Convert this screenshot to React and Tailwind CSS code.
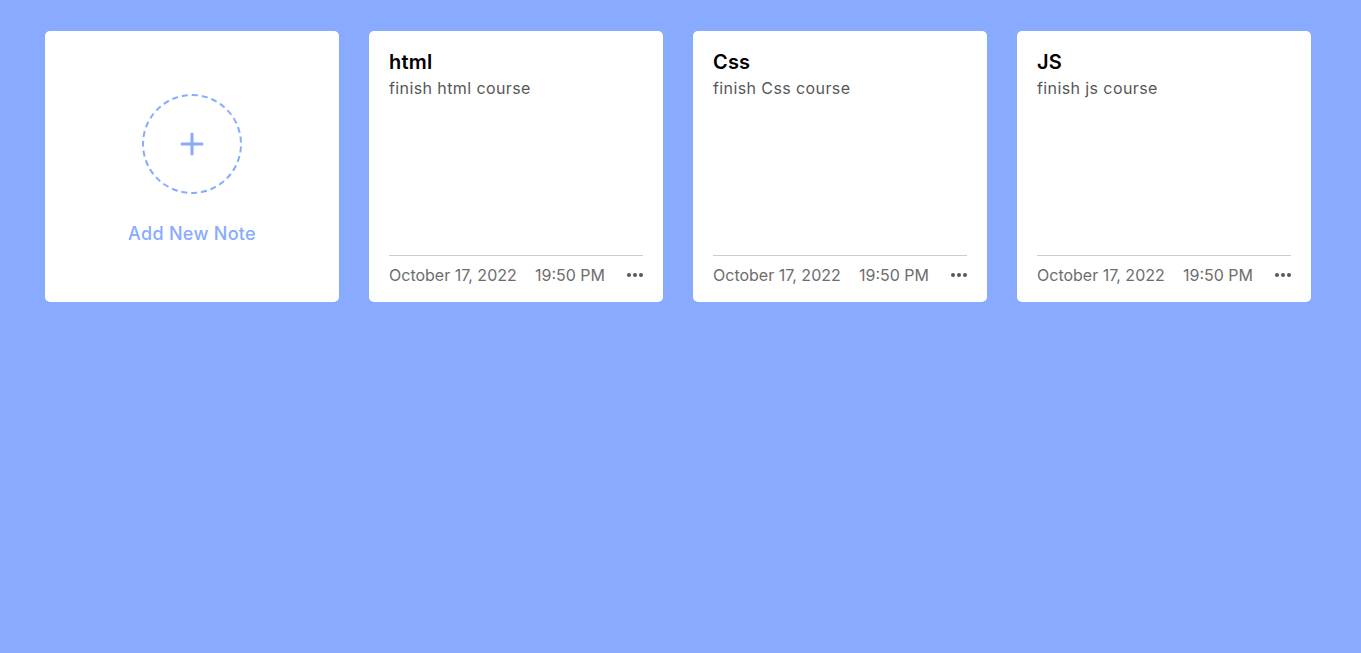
const notes = [
  { title: 'html', desc: 'finish html course' },
  { title: 'Css', desc: 'finish Css course' },
  { title: 'JS', desc: 'finish js course' },
];

function NoteCard({ title, desc }) {
  return (
    <li className="flex h-[271px] flex-col rounded-[5px] bg-white px-5 pb-[15px] pt-[17px]">
      <div className="flex-1">
        <p className="text-[20px] font-semibold leading-[28px] tracking-[0.2px] text-black">{title}</p>
        <span className="block text-[16px] leading-[24px] tracking-[0.4px] text-[#575757]">{desc}</span>
      </div>
      <div className="flex items-center justify-between border-t border-[#ccc] pt-[7px] text-[16px] leading-[24px] text-[#6d6d6d]">
        <span>October 17, 2022</span>
        <span className="ml-auto mr-[22px]">19:50 PM</span>
        <span className="flex gap-[2px]">
          <i className="block h-[4px] w-[4px] rounded-full bg-[#575757]" />
          <i className="block h-[4px] w-[4px] rounded-full bg-[#575757]" />
          <i className="block h-[4px] w-[4px] rounded-full bg-[#575757]" />
        </span>
      </div>
    </li>
  );
}

export default function App() {
  return (
    <div className="min-h-[653px] bg-[#88abff] font-['Inter',sans-serif]">
      <ul className="grid grid-cols-[repeat(4,294px)] gap-[30px] pl-[45px] pt-[31px]">
        <li className="flex h-[271px] flex-col items-center rounded-[5px] bg-white pt-[63px]">
          <div className="flex h-[100px] w-[100px] items-center justify-center rounded-full border-2 border-dashed border-[#88abff]">
            <svg width="26" height="26" viewBox="0 0 26 26" fill="none" stroke="#88abff" strokeWidth="3" strokeLinecap="round">
              <path d="M13 3v20M3 13h20" />
            </svg>
          </div>
          <p className="mt-[26px] text-[18px] font-medium tracking-[0.3px] text-[#88abff]">Add New Note</p>
        </li>
        {notes.map((n) => (
          <NoteCard key={n.title} {...n} />
        ))}
      </ul>
    </div>
  );
}
